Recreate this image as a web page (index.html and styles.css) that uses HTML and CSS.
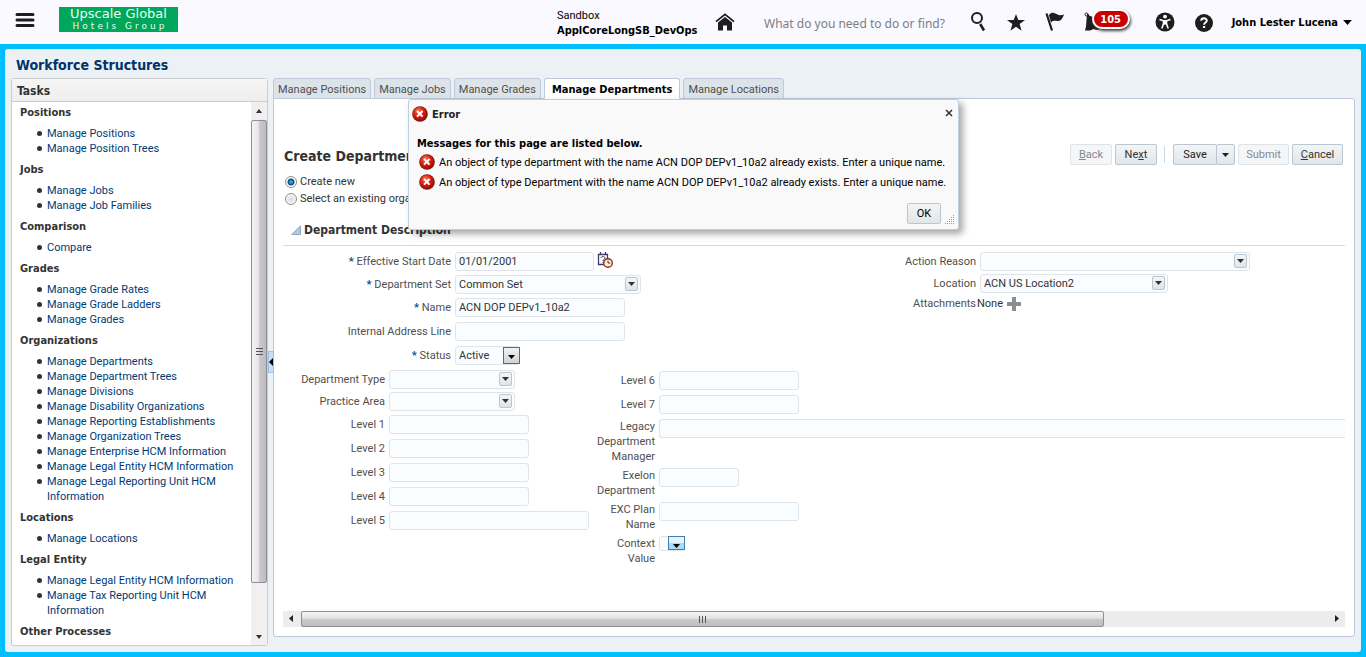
FILE: index.html
```html
<!DOCTYPE html>
<html lang="en">
<head>
<meta charset="utf-8">
<title>Workforce Structures</title>
<link rel="stylesheet" href="styles.css">
</head>
<body>
<svg class="defs" width="0" height="0" aria-hidden="true">
  <defs>
    <radialGradient id="red" cx="40%" cy="30%" r="70%">
      <stop offset="0" stop-color="#ff7a5c"/><stop offset="0.5" stop-color="#e0230f"/><stop offset="1" stop-color="#a30d05"/>
    </radialGradient>
    <symbol id="error" viewBox="0 0 16 16">
      <circle cx="8" cy="8" r="7.800" fill="#7d1a14"/>
      <circle cx="7.800" cy="7.800" r="6.900" fill="url(#red)"/>
      <path d="M5 5l5.600 5.600M10.600 5l-5.600 5.600" stroke="#fff" stroke-width="2"/>
    </symbol>
    <symbol id="down" viewBox="0 0 7 4"><path d="M0 0h7L3.500 4z" fill="currentColor"/></symbol>
  </defs>
</svg>

<header class="topbar">
  <button class="icon-btn menu" aria-label="Navigator">
    <svg width="20" height="16" viewBox="0 0 20 16"><path d="M2 2.500h16M2 8h16M2 13.500h16" stroke="#1e1e1e" stroke-width="3" stroke-linecap="round"/></svg>
  </button>
  <div class="logo"><span class="logo-top">Upscale Global</span><span class="logo-bottom">Hotels Group</span></div>
  <div class="sandbox"><span>Sandbox</span><strong>ApplCoreLongSB_DevOps</strong></div>
  <button class="icon-btn home" aria-label="Home">
    <svg width="20" height="18" viewBox="0 0 20 18"><path d="M1 8.600L10 1.400l9 7.200" fill="none" stroke="#1e1e1e" stroke-width="1.800"/><path d="M10 4L3 9.600v7.900h5V12.500h4v5h5V9.600z" fill="#1e1e1e"/></svg>
  </button>
  <input class="search" type="search" aria-label="Search" placeholder="What do you need to do or find?">
  <nav class="tools" aria-label="Global tools">
    <button class="icon-btn" aria-label="Search"><svg width="18" height="20" viewBox="0 0 18 20"><circle cx="8" cy="6" r="5" fill="none" stroke="#1e1e1e" stroke-width="2"/><path d="M11.200 12l3.800 6.500" stroke="#1e1e1e" stroke-width="2.600"/></svg></button>
    <button class="icon-btn" aria-label="Favorites"><svg width="20" height="20" viewBox="0 0 20 20"><path d="M10 2l2.300 6H19l-5.400 4 2 6.800-5.600-4.100-5.600 4.100 2-6.800L1 8h6.700z" fill="#1e1e1e"/></svg></button>
    <button class="icon-btn" aria-label="Watchlist"><svg width="20" height="20" viewBox="0 0 20 20"><path d="M1.500 1.500l5.500 17" stroke="#1e1e1e" stroke-width="2.200"/><path d="M3.800 3C7-.5 9.500 1 12 2.300c2.400 1.200 4.500 1 7 .2-1.500 4-3 6.500-6 6.600-2.500.1-4-1.200-7 1.400z" fill="#1e1e1e"/></svg></button>
    <button class="icon-btn bell" aria-label="Notifications"><svg width="20" height="20" viewBox="0 0 20 20"><path d="M3 2c2 0 2 1.500 3 2 3 .5 7 4 8 8l2 5-3 1-4-1c-2 2-4 1.500-8 1.500l1-4z" fill="#1e1e1e"/><circle cx="2.500" cy="2.500" r="1.500" fill="none" stroke="#1e1e1e"/></svg><span class="badge">105</span></button>
    <button class="icon-btn" aria-label="Accessibility"><svg width="20" height="20" viewBox="0 0 20 20"><circle cx="10" cy="10" r="9.500" fill="#1e1e1e"/><circle cx="10" cy="4.600" r="1.900" fill="#fff"/><path d="M4.500 7.500l4 1.300v3L6.800 16.500M15.500 7.500l-4 1.300v3l1.700 4.700" fill="none" stroke="#fff" stroke-width="1.600" stroke-linejoin="round"/><path d="M8 8h4v4.600H8z" fill="#fff"/></svg></button>
    <button class="icon-btn" aria-label="Help"><svg width="20" height="20" viewBox="0 0 20 20"><circle cx="10" cy="11" r="9" fill="#1e1e1e"/><path d="M7.200 8.800c.1-3.400 5.700-3.200 5.600-.1 0 1.800-2.700 2-2.700 4" fill="none" stroke="#fff" stroke-width="1.900"/><path d="M9 14h2.200v2H9z" fill="#fff"/></svg></button>
  </nav>
  <button class="user">John Lester Lucena <svg width="9" height="5"><use href="#down"/></svg></button>
</header>

<main class="frame">
  <div class="workarea">
    <h1 class="title">Workforce Structures</h1>
    <div class="columns">
      <aside class="tasks">
        <h2 class="tasks-head">Tasks</h2>
        <div class="tasks-body">
          <div class="tasks-list">
            <h3>Positions</h3>
            <ul><li><a href="#">Manage Positions</a></li><li><a href="#">Manage Position Trees</a></li></ul>
            <h3>Jobs</h3>
            <ul><li><a href="#">Manage Jobs</a></li><li><a href="#">Manage Job Families</a></li></ul>
            <h3>Comparison</h3>
            <ul><li><a href="#">Compare</a></li></ul>
            <h3>Grades</h3>
            <ul><li><a href="#">Manage Grade Rates</a></li><li><a href="#">Manage Grade Ladders</a></li><li><a href="#">Manage Grades</a></li></ul>
            <h3>Organizations</h3>
            <ul><li><a href="#">Manage Departments</a></li><li><a href="#">Manage Department Trees</a></li><li><a href="#">Manage Divisions</a></li><li><a href="#">Manage Disability Organizations</a></li><li><a href="#">Manage Reporting Establishments</a></li><li><a href="#">Manage Organization Trees</a></li><li><a href="#">Manage Enterprise HCM Information</a></li><li><a href="#">Manage Legal Entity HCM Information</a></li><li><a href="#">Manage Legal Reporting Unit HCM Information</a></li></ul>
            <h3>Locations</h3>
            <ul><li><a href="#">Manage Locations</a></li></ul>
            <h3>Legal Entity</h3>
            <ul><li><a href="#">Manage Legal Entity HCM Information</a></li><li><a href="#">Manage Tax Reporting Unit HCM Information</a></li></ul>
            <h3>Other Processes</h3>
          </div>
          <div class="vbar" aria-hidden="true">
            <svg width="16" height="18"><path d="M5 11l3-4 3 4z" fill="#333"/></svg>
            <div class="vthumb"><i></i><i></i><i></i></div>
            <svg class="vend" width="16" height="17"><path d="M5 7h6l-3 4z" fill="#333"/></svg>
          </div>
        </div>
      </aside>
      <button class="splitter" aria-label="Collapse pane"><svg width="4" height="8"><path d="M4 0v8L0 4z" fill="#000"/></svg></button>

      <section class="main">
        <div class="tabs" role="tablist">
          <button class="tab" role="tab">Manage Positions</button>
          <button class="tab" role="tab">Manage Jobs</button>
          <button class="tab" role="tab">Manage Grades</button>
          <button class="tab active" role="tab" aria-selected="true">Manage Departments</button>
          <button class="tab" role="tab">Manage Locations</button>
        </div>
        <div class="content">
          <div class="page-head">
            <h2>Create Department</h2>
            <div class="actions">
              <button class="btn" disabled><u>B</u>ack</button>
              <button class="btn">Ne<u>x</u>t</button>
              <span class="sep"></span>
              <span class="split"><button class="btn">Save</button><button class="btn more" aria-label="More save options"><svg width="7" height="4"><use href="#down"/></svg></button></span>
              <button class="btn wide" disabled>Submit</button>
              <button class="btn wide"><u>C</u>ancel</button>
            </div>
          </div>
          <div class="radios">
            <label><input type="radio" name="mode" checked>Create new</label>
            <label><input type="radio" name="mode">Select an existing organization</label>
          </div>
          <h3 class="section"><svg width="10" height="10" viewBox="0 0 10 10"><path d="M9.500 .8v8.700H.8z" fill="#b4c8da" stroke="#86a9cc"/></svg>Department Description</h3>

          <div class="forms">
            <div class="form primary">
              <div class="row r23"><label for="esd"><b>*</b> Effective Start Date</label><input id="esd" class="w139" value="01/01/2001">
                <button class="icon-btn date" aria-label="Select date"><svg width="16" height="16" viewBox="0 0 16 16"><path d="M1.500 2.500h9v10h-9zM3.500 0v3M8.500 0v3" fill="#fff" stroke="#3c3c6c" stroke-width="1.300"/><path d="M4 6c0-2 4-2 4 0 0 1.200-2 1.200-2 3M6 10v1" fill="none" stroke="#3c3c6c"/><circle cx="11" cy="11" r="4.300" fill="#fff2d0" stroke="#9c2c1c" stroke-width="1.400"/><path d="M11 8.500V11h2.200" fill="none" stroke="#333"/></svg></button></div>
              <div class="row r23"><label for="set"><b>*</b> Department Set</label><span class="combo w186"><select id="set"><option>Common Set</option></select><i class="drop"><svg width="7" height="4"><use href="#down"/></svg></i></span></div>
              <div class="row r24"><label for="name"><b>*</b> Name</label><input id="name" class="w170" value="ACN DOP DEPv1_10a2"></div>
              <div class="row r24"><label for="ial">Internal Address Line</label><input id="ial" class="w170"></div>
              <div class="row r24"><label for="status"><b>*</b> Status</label><span class="combo native w65"><select id="status"><option>Active</option></select><i class="drop"><svg width="7" height="4"><use href="#down"/></svg></i></span></div>
            </div>
            <div class="form side">
              <div class="row r22"><label for="reason">Action Reason</label><span class="combo w270"><select id="reason"><option></option></select><i class="drop"><svg width="7" height="4"><use href="#down"/></svg></i></span></div>
              <div class="row r22"><label for="loc">Location</label><span class="combo w188"><select id="loc"><option>ACN US Location2</option></select><i class="drop"><svg width="7" height="4"><use href="#down"/></svg></i></span></div>
              <div class="row attach"><span class="lbl">Attachments</span><span>None</span><button class="icon-btn" aria-label="Add attachment"><svg width="14" height="14"><path d="M5 0h4v5h5v4H9v5H5V9H0V5h5z" fill="#8a8f94"/></svg></button></div>
            </div>
          </div>

          <div class="flex-fields">
            <div class="form flex-left">
              <div class="row r22"><label for="dt">Department Type</label><span class="combo w126"><select id="dt"><option></option></select><i class="drop"><svg width="7" height="4"><use href="#down"/></svg></i></span></div>
              <div class="row r23"><label for="pa">Practice Area</label><span class="combo w126"><select id="pa"><option></option></select><i class="drop"><svg width="7" height="4"><use href="#down"/></svg></i></span></div>
              <div class="row r24"><label for="l1">Level 1</label><input id="l1" class="w140"></div>
              <div class="row r24"><label for="l2">Level 2</label><input id="l2" class="w140"></div>
              <div class="row r24"><label for="l3">Level 3</label><input id="l3" class="w140"></div>
              <div class="row r24"><label for="l4">Level 4</label><input id="l4" class="w140"></div>
              <div class="row r24"><label for="l5">Level 5</label><input id="l5" class="w200"></div>
            </div>
            <div class="form flex-right">
              <div class="row r24"><label for="l6">Level 6</label><input id="l6" class="w140"></div>
              <div class="row r24"><label for="l7">Level 7</label><input id="l7" class="w140"></div>
              <div class="row multi"><label for="ldm">Legacy Department Manager</label><input id="ldm" class="grow"></div>
              <div class="row multi"><label for="ed">Exelon Department</label><input id="ed" class="w80"></div>
              <div class="row multi"><label for="epn">EXC Plan Name</label><input id="epn" class="w140"></div>
              <div class="row multi"><label for="cv">Context Value</label><span class="combo native hot w26"><select id="cv"><option></option></select><i class="drop"><svg width="7" height="4"><use href="#down"/></svg></i></span></div>
            </div>
          </div>

          <div class="hbar" aria-hidden="true">
            <svg width="18" height="16"><path d="M10 4v7L6 7.500z" fill="#222"/></svg>
            <div class="htrack"><div class="hthumb"><i></i><i></i><i></i></div></div>
            <svg width="18" height="16"><path d="M8 4v7l4-3.500z" fill="#222"/></svg>
          </div>
        </div>
      </section>
    </div>
  </div>
</main>

<div class="dialog" role="dialog" aria-labelledby="dlg-title">
  <div class="dialog-head">
    <svg width="16" height="16"><use href="#error"/></svg><h2 id="dlg-title">Error</h2>
    <button class="icon-btn close" aria-label="Close"><svg width="8" height="8"><path d="M1 1l6 6M7 1L1 7" stroke="#333" stroke-width="1.500"/></svg></button>
  </div>
  <p class="dialog-lead">Messages for this page are listed below.</p>
  <ul class="messages">
    <li><svg width="16" height="16"><use href="#error"/></svg>An object of type department with the name ACN DOP DEPv1_10a2 already exists. Enter a unique name.</li>
    <li><svg width="16" height="16"><use href="#error"/></svg>An object of type Department with the name ACN DOP DEPv1_10a2 already exists. Enter a unique name.</li>
  </ul>
  <div class="dialog-foot">
    <button class="btn ok">OK</button>
    <svg class="grip" width="10" height="10"><path d="M8.500 0v10M6.500 2v8M4.500 4v6M2.500 6v4M.5 8v2" stroke="#999" stroke-dasharray="1 1"/></svg>
  </div>
</div>
</body>
</html>
```

FILE: styles.css
```css
:root {
  --field-line: #dfe4e8;
  --field: #f9fdff;
  --ink: #333;
  --strong: "DejaVu Sans Condensed", "Noto Sans", Tahoma, sans-serif;
}
* { box-sizing: border-box; }
body {
  margin: 0;
  height: 100vh;
  display: flex;
  flex-direction: column;
  overflow: hidden;
  background: #00bfff;
  color: var(--ink);
  font: 11px/15px Roboto, Tahoma, sans-serif;
}
h1, h2, h3, p, ul { margin: 0; padding: 0; }
h1, h2, h3, strong { font-weight: 700; font-family: var(--strong); }
button, input, select { font: inherit; color: inherit; margin: 0; }
i { font-style: normal; }
svg { display: block; flex: none; }
.defs { position: absolute; }
.icon-btn { display: block; padding: 0; border: 0; background: none; flex: none; }

/* top bar */
.topbar {
  flex: none;
  height: 44px;
  display: flex;
  align-items: center;
  padding: 0 14px 0 15px;
  background: #f9f9ff;
  color: #000;
}
.menu { margin-bottom: 4px; }
.logo {
  width: 119px;
  height: 25px;
  margin: 0 379px 5px 24px;
  display: flex;
  flex-direction: column;
  align-items: center;
  background: #00a65a;
  color: #e6fff2;
  font-family: "DejaVu Sans", sans-serif;
}
.logo-top { font-size: 13px; line-height: 13px; white-space: nowrap; }
.logo-bottom { font-size: 9px; line-height: 12px; letter-spacing: 3px; margin-right: -3px; white-space: nowrap; }
.sandbox { width: 158px; padding-top: 2px; display: flex; flex-direction: column; white-space: nowrap; }
.search {
  flex: 1;
  min-width: 0;
  margin: 3px 0 0 29px;
  padding: 0;
  border: 0;
  outline: 0;
  background: none;
  font-family: "Noto Sans", Tahoma, sans-serif;
  font-size: 12px;
  line-height: 20px;
}
.search::placeholder { color: #7d7d85; }
.tools { display: flex; gap: 19px; margin-right: 18px; }
.bell { position: relative; margin-right: 32px; }
.badge {
  position: absolute;
  left: 8px;
  top: -3px;
  width: 38px;
  height: 20px;
  border: 2px solid #fff;
  border-radius: 10px;
  background: #c80000;
  color: #fff;
  font-family: var(--strong);
  font-weight: 700;
  line-height: 17px;
  box-shadow: 1px 2px 3px #444;
}
.user { display: flex; align-items: center; gap: 5px; padding: 0; border: 0; background: none; font-family: var(--strong); font-weight: 700; white-space: nowrap; }

/* work area */
.frame { flex: 1; min-height: 0; padding: 5px; display: flex; }
.workarea {
  flex: 1;
  min-width: 0;
  display: flex;
  flex-direction: column;
  padding: 7px 6px 6px;
  border-radius: 3px;
  background: #ebf1f5;
}
.title { padding-left: 5px; font-size: 14px; line-height: 19px; margin-bottom: 3px; color: #003366; }
.columns { flex: 1; min-height: 0; display: flex; }
.tasks {
  flex: none;
  width: 257px;
  display: flex;
  flex-direction: column;
  border: 1px solid #ccc;
  border-radius: 3px;
  background: #fff;
}
.tasks-head { padding: 4px 5px 2px; font-size: 12px; line-height: 16px; border-bottom: 1px solid #ccc; background: linear-gradient(#f6f6f6, #eee); }
.tasks-body { flex: 1; min-height: 0; display: flex; }
.tasks-list { flex: 1; padding: 3px 0 0 8px; overflow: hidden; }
.tasks-list h3 { font-size: 11px; }
.tasks-list ul { padding: 6px 16px 6px 27px; list-style: none; }
.tasks-list li { position: relative; }
.tasks-list li::before { content: ""; position: absolute; left: -10px; top: 5px; width: 5px; height: 5px; border-radius: 50%; background: #333; }
.tasks-list a { color: #003a75; text-decoration: none; }
.vbar { width: 16px; display: flex; flex-direction: column; background: #f0f0f0; }
.vthumb {
  height: 463px;
  display: flex;
  flex-direction: column;
  align-items: center;
  justify-content: center;
  gap: 2px;
  border: 1px solid #8f8f8f;
  border-radius: 2px;
  background: linear-gradient(90deg, #f5f5f5, #e6e6e8 45%, #c8c8cc 55%, #bcbcc2);
}
.vthumb i { width: 7px; height: 1px; background: #555; }
.vend { margin-top: auto; }
.splitter { align-self: center; flex: none; width: 6px; height: 22px; margin: 0 -1px 0 0; padding: 0; border: 1px solid #9fc0e4; background: #c8defa; z-index: 1; }

/* tabs and content */
.main { flex: 1; min-width: 0; display: flex; flex-direction: column; }
.tabs { display: flex; gap: 3px; margin-bottom: -1px; }
.tab {
  height: 21px;
  padding: 1px 4px 0;
  border: 1px solid #bccadb;
  border-radius: 3px 3px 0 0;
  background: #dde4e9;
  color: #4f4f4f;
  white-space: nowrap;
}
.tab.active { padding: 1px 7px 0; background: #fff; border-bottom-color: #fff; color: #000; font-family: var(--strong); font-weight: 700; z-index: 1; }
.content {
  flex: 1;
  min-height: 0;
  margin-bottom: 9px;
  padding: 45px 9px 9px;
  display: flex;
  flex-direction: column;
  border: 1px solid #bccadb;
  border-radius: 0 3px 3px 3px;
  background: #fff;
}
.page-head { display: flex; justify-content: space-between; align-items: flex-start; }
.page-head h2 { font-size: 14px; line-height: 20px; padding: 2px 0 0 1px; white-space: nowrap; }
.actions { display: flex; align-items: center; gap: 3px; margin-right: 2px; }
.btn {
  height: 21px;
  min-width: 42px;
  padding: 0;
  border: 1px solid #b9c7d3;
  border-radius: 2px;
  background: linear-gradient(#f3f5f6, #e1e6e9);
}
.btn.wide { min-width: 51px; }
.btn:disabled { border-color: #dde3e8; background: #f4f6f8; color: #85898f; }
.split { display: flex; }
.btn.more { min-width: 19px; width: 19px; margin-left: -1px; }
.btn.more svg { margin: auto; }
.split .btn { color: #222; }
.split .btn:first-child { min-width: 44px; }
.sep { width: 1px; height: 17px; margin: 0 5px 0 4px; background: #cfd9e2; }
.radios { padding: 7px 0 0 2px; display: flex; flex-direction: column; }
.radios label { display: flex; align-items: center; gap: 3px; height: 17px; white-space: nowrap; }
.radios input {
  appearance: none;
  width: 12px;
  height: 12px;
  border: 1px solid #8e8f8f;
  border-radius: 50%;
  background: radial-gradient(#d8d8d8, #f8f8f8 70%);
}
.radios input:checked { background: radial-gradient(circle, #4ac0f0 0, #0c4a7c 3px, #fff 4px); }
.section {
  display: flex;
  align-items: center;
  gap: 3px;
  padding: 15px 0 7px 8px;
  font-size: 12px;
  line-height: 16px;
  border-bottom: 1px solid #d5dce3;
}

/* fields */
.forms { display: flex; padding-top: 6px; }
.primary { flex: 1; }
.side { flex: none; width: 465px; }
.row { display: flex; align-items: flex-start; }
.row label, .lbl { flex: none; padding-top: 2px; margin-right: 4px; text-align: right; color: #4f4f4f; }
.row label b { color: #00509a; }
.primary label { width: 168px; }
.side label, .lbl { width: 96px; }
.r22 { height: 22px; }
.r23 { height: 23px; }
.r24 { height: 24px; }
.row input, .combo select {
  display: block;
  height: 19px;
  padding: 0 3px;
  border: 1px solid var(--field-line);
  border-radius: 3px;
  outline: 0;
  background: var(--field);
}
.date { margin-left: 3px; }
.combo { position: relative; display: block; }
.combo select { appearance: none; width: 100%; }
.drop {
  position: absolute;
  right: 3px;
  top: 2px;
  width: 13px;
  height: 14px;
  display: flex;
  align-items: center;
  justify-content: center;
  border: 1px solid #b9c7d3;
  border-radius: 2px;
  background: linear-gradient(#f3f5f6, #dfe4e8);
  pointer-events: none;
}
.native .drop { right: 0; top: 1px; width: 17px; height: 17px; padding-top: 2px; border-color: #666; border-radius: 0; background: linear-gradient(#f2f2f2, #d2d2d2); color: #000; }
.hot select { height: 15px; }
.native.hot .drop { top: 0; height: 14px; padding-top: 5px; border-color: #3c7fb1; background: linear-gradient(#e5f4fc 45%, #a9dbf6 50%); }
.attach { align-items: center; height: 15px; }
.attach .lbl { padding: 0; margin-right: 1px; }
.attach .icon-btn { margin-left: 4px; }
.flex-fields { flex: 1; min-height: 0; display: flex; }
.flex-left { width: 306px; }
.flex-left label { width: 102px; }
.flex-right { flex: 1; min-width: 0; padding-top: 1px; }
.flex-right label { width: 66px; }
.multi { padding-bottom: 4px; }
.row.multi label { padding: 0; }
.row .grow { flex: 1; min-width: 0; border-right: 0; border-radius: 3px 0 0 3px; }
.w26 { width: 26px; }
.w65 { width: 65px; }
.w80 { width: 80px; }
.w126 { width: 126px; }
.w139 { width: 139px; }
.w140 { width: 140px; }
.w170 { width: 170px; }
.w186 { width: 186px; }
.w188 { width: 188px; }
.w200 { width: 200px; }
.w270 { width: 270px; }

.hbar { display: flex; height: 16px; background: #ececec; }
.htrack { flex: 1; display: flex; }
.hthumb {
  width: 78.3%;
  display: flex;
  align-items: center;
  justify-content: center;
  gap: 2px;
  border: 1px solid #8f8f8f;
  border-radius: 2px;
  background: linear-gradient(#f5f5f5, #e2e2e4 45%, #c8c8cc 55%, #bcbcc2);
}
.hthumb i { width: 1px; height: 7px; background: #555; }

/* error dialog */
.dialog {
  position: absolute;
  left: calc(50% - 275px);
  top: 99px;
  width: 551px;
  padding: 5px 9px 4px 8px;
  border: 1px solid #c0cfdd;
  border-radius: 3px;
  background: #f9f9f9;
  color: #000;
  box-shadow: 4px 4px 7px rgba(0, 0, 0, .35);
  z-index: 5;
}
.dialog-head { display: flex; align-items: center; gap: 4px; margin-left: -5px; height: 18px; }
.dialog-head h2 { font-size: 11px; color: #222; }
.close { margin: 0 -4px 3px auto; }
.dialog-lead { margin-top: 13px; font-size: 11px; line-height: 16px; font-weight: 700; font-family: var(--strong); }
.messages { list-style: none; padding: 0 0 0 2px; }
.messages li { display: flex; align-items: center; gap: 4px; height: 20px; white-space: nowrap; }
.dialog-foot { display: flex; justify-content: flex-end; align-items: flex-end; gap: 4px; margin: 11px -6px 0 0; }
.ok { min-width: 34px; margin-bottom: 1px; }
```
